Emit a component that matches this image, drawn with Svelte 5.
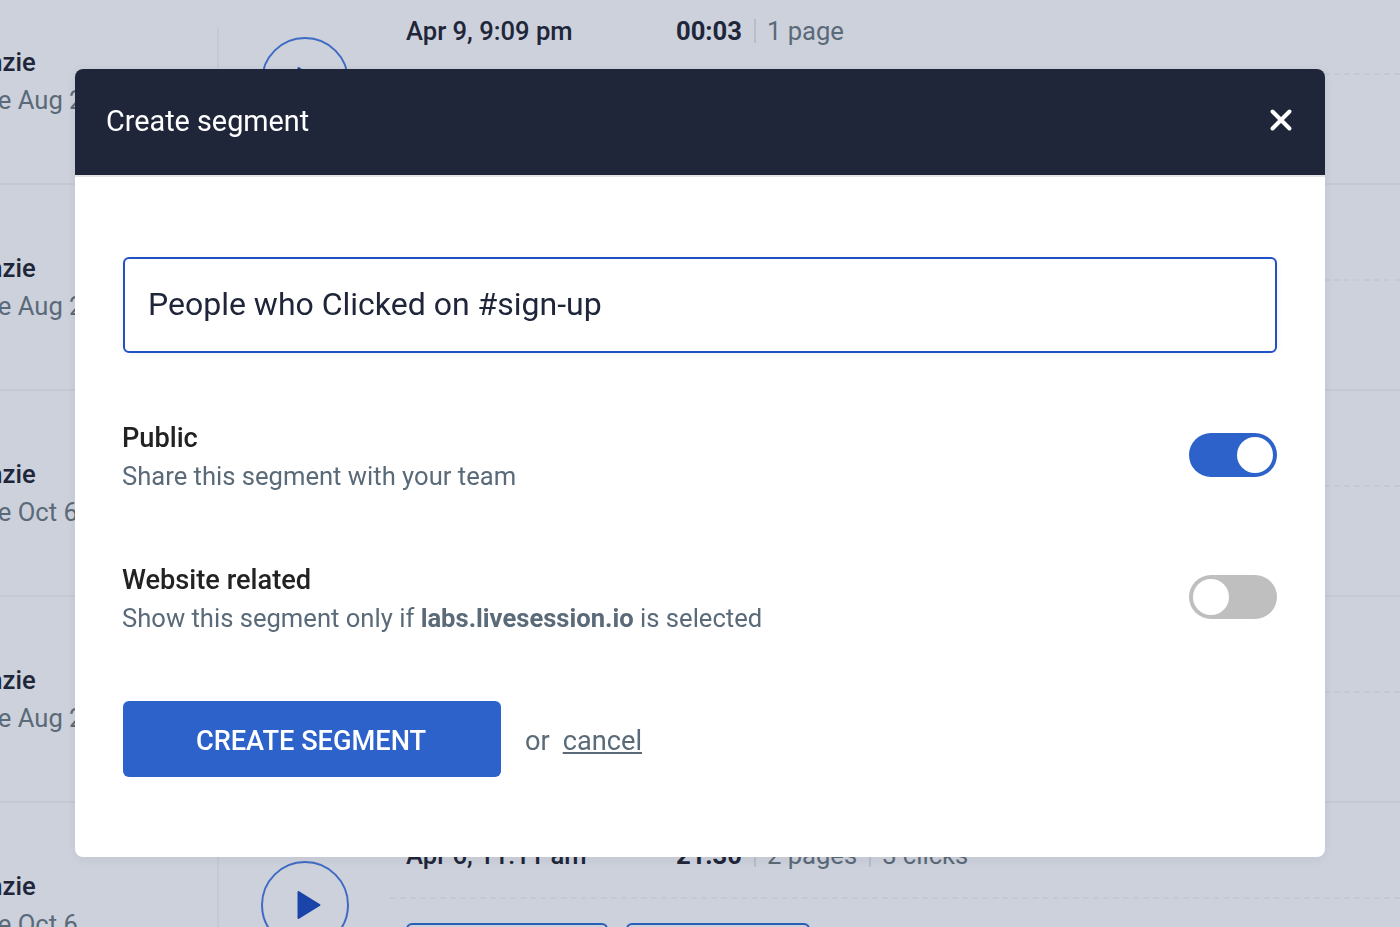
<script lang="ts">
  // Session list behind a "Create segment" modal.
  const sessions = [
    { name: "Mackenzie", last: "Active since Aug 2", date: "Apr 9, 9:09 pm", time: "00:03", meta: ["1 page"] },
    { name: "Mackenzie", last: "Active since Aug 2", date: "Apr 9, 8:40 pm", time: "02:12", meta: ["1 page"] },
    { name: "Mackenzie", last: "Active since Oct 6", date: "Apr 8, 4:20 pm", time: "01:45", meta: ["2 pages"] },
    { name: "Mackenzie", last: "Active since Aug 2", date: "Apr 7, 2:31 pm", time: "00:58", meta: ["1 page"] },
    { name: "Mackenzie", last: "Active since Oct 6", date: "Apr 6, 11:11 am", time: "21:30", meta: ["2 pages", "3 clicks"] },
  ];

  let isPublic = $state(true);
  let websiteRelated = $state(false);
  let segmentName = $state("People who Clicked on #sign-up");
</script>

<div class="page">
  <div class="list">
    {#each sessions as s}
      <div class="row">
        <div class="user">
          <div class="user-name">{s.name}</div>
          <div class="user-seen">{s.last}</div>
        </div>
        <div class="play">
          <svg viewBox="0 0 24 30" width="24" height="30"><path d="M1.5 2v26l21-13z" fill="#1a44a8" stroke="#1a44a8" stroke-width="2" stroke-linejoin="round"/></svg>
        </div>
        <div class="details">
          <div class="line">
            <span class="date">{s.date}</span>
            <span class="time">{s.time}</span>
            {#each s.meta as m}
              <span class="sep"></span>
              <span class="meta">{m}</span>
            {/each}
          </div>
          <div class="dash"></div>
          <div class="tags">
            <span class="tag"></span>
            <span class="tag short"></span>
          </div>
        </div>
      </div>
    {/each}
  </div>
</div>

<div class="modal">
  <header class="modal-head">
    <span>Create segment</span>
    <button class="close" aria-label="Close">
      <svg viewBox="0 0 24 24" width="24" height="24"><path d="M3.5 3.5l17 17M20.5 3.5l-17 17" stroke="#fff" stroke-width="4" stroke-linecap="round"/></svg>
    </button>
  </header>
  <div class="modal-body">
    <input class="name-input" bind:value={segmentName} />

    <div class="option first">
      <div class="opt-text">
        <div class="opt-title">Public</div>
        <div class="opt-help">Share this segment with your team</div>
      </div>
      <button class="toggle" class:on={isPublic} aria-label="Public" onclick={() => isPublic = !isPublic}><i></i></button>
    </div>

    <div class="option">
      <div class="opt-text">
        <div class="opt-title">Website related</div>
        <div class="opt-help">Show this segment only if <b>labs.livesession.io</b> is selected</div>
      </div>
      <button class="toggle" class:on={websiteRelated} aria-label="Website related" onclick={() => websiteRelated = !websiteRelated}><i></i></button>
    </div>

    <div class="actions">
      <button class="primary">CREATE SEGMENT</button>
      <span class="or">or</span>
      <a class="cancel" href="#cancel">cancel</a>
    </div>
  </div>
</div>

<style>
  :global(body) {
    margin: 0;
    background: #cdd1dc;
    font-family: Roboto, "Liberation Sans", sans-serif;
    overflow: hidden;
  }
  .page {
    height: 927px;
    overflow: hidden;
  }
  .list {
    margin-top: -21px;
  }
  .row {
    display: flex;
    height: 206px;
    box-sizing: border-box;
    border-bottom: 2px solid #c4c9d6;
    position: relative;
  }
  .row::before {
    content: "";
    position: absolute;
    left: 217px;
    top: 48px;
    bottom: 0;
    width: 2px;
    background: #c4c9d6;
  }
  .user {
    flex: none;
    width: 345px;
    margin-left: -127px;
    box-sizing: border-box;
    padding-top: 69px;
    white-space: nowrap;
  }
  .user-name {
    padding-left: 39px;
    font-size: 25.6px;
    font-weight: 500;
    line-height: 28px;
    color: #20263a;
  }
  .user-seen {
    padding-left: 1px;
    font-size: 25.6px;
    line-height: 30px;
    margin-top: 9px;
    color: #5a6a78;
  }
  .play {
    flex: none;
    width: 84px;
    height: 84px;
    margin: 58px 0 0 43px;
    border: 2px solid #3f6bc4;
    border-radius: 50%;
    display: flex;
    align-items: center;
    justify-content: center;
  }
  .play svg {
    margin-left: 7px;
  }
  .details {
    margin-left: 41px;
    flex: 1;
    padding-top: 35px;
  }
  .line {
    display: flex;
    align-items: center;
    height: 34px;
    margin-left: 16px;
    font-size: 25.6px;
    white-space: nowrap;
  }
  .date {
    width: 270px;
    flex: none;
    font-weight: 500;
    color: #20263a;
  }
  .time {
    font-weight: 700;
    color: #20263a;
  }
  .sep {
    width: 2px;
    height: 24px;
    background: #b8bdca;
    margin: 0 11px 0 12px;
  }
  .meta {
    color: #5a6a78;
  }
  .dash {
    margin-top: 25px;
    border-top: 2px dashed #c4c9d6;
  }
  .tags {
    display: flex;
    gap: 18px;
    margin: 24px 0 0 16px;
  }
  .tag {
    width: 202px;
    height: 40px;
    box-sizing: border-box;
    border: 2px solid #2a5fb8;
    border-radius: 6px;
  }
  .tag.short {
    width: 184px;
  }

  .modal {
    position: fixed;
    left: 75px;
    top: 69px;
    width: 1250px;
    height: 788px;
    background: #fff;
    border-radius: 8px;
    overflow: hidden;
    box-shadow: 0 2px 12px rgba(32, 38, 58, 0.06);
  }
  .modal-head {
    height: 104px;
    background: #20263a;
    border-bottom: 2px solid #e4e4e6;
    display: flex;
    align-items: center;
    justify-content: space-between;
    padding: 0 32px 2px 31px;
    color: #fff;
    font-size: 28.8px;
  }
  .close {
    background: none;
    border: 0;
    padding: 0;
    margin-top: -2px;
    display: flex;
  }
  .modal-body {
    padding: 80px 48px 0;
  }
  .name-input {
    display: block;
    width: 100%;
    height: 96px;
    box-sizing: border-box;
    border: 2px solid #1f50c4;
    border-radius: 6px;
    padding: 0 23px 2px;
    font-family: inherit;
    font-size: 32px;
    color: #20263a;
    outline: none;
    box-shadow: 0 2px 8px rgba(32, 38, 58, 0.05);
  }
  .option {
    display: flex;
    justify-content: space-between;
    align-items: center;
    margin-top: 60px;
  }
  .option.first {
    margin-top: 61px;
  }
  .opt-text {
    padding-top: 6px;
    margin-left: -1px;
  }
  .opt-title {
    font-size: 27.2px;
    font-weight: 500;
    line-height: 36px;
    color: #222;
  }
  .opt-help {
    font-size: 25.6px;
    line-height: 40px;
    color: #5a6a78;
  }
  .opt-help b {
    font-weight: 700;
  }
  .toggle {
    width: 88px;
    height: 44px;
    border: 0;
    padding: 4px;
    border-radius: 22px;
    background: #bfbfbf;
    display: flex;
    justify-content: flex-start;
  }
  .toggle.on {
    background: #2c62c9;
    justify-content: flex-end;
  }
  .toggle i {
    width: 36px;
    height: 36px;
    border-radius: 50%;
    background: #fff;
  }
  .actions {
    display: flex;
    align-items: center;
    margin-top: 63px;
    font-size: 27.2px;
    color: #5a6a78;
  }
  .primary {
    width: 378px;
    height: 76px;
    border: 0;
    border-radius: 6px;
    padding: 4px 2px 0 0;
    background: #2c62c9;
    color: #fff;
    font-family: inherit;
    font-size: 27.2px;
    font-weight: 500;
  }
  .or {
    margin-left: 24px;
    padding-top: 4px;
  }
  .cancel {
    margin-left: 13px;
    padding-top: 4px;
    color: #5a6a78;
  }
</style>
